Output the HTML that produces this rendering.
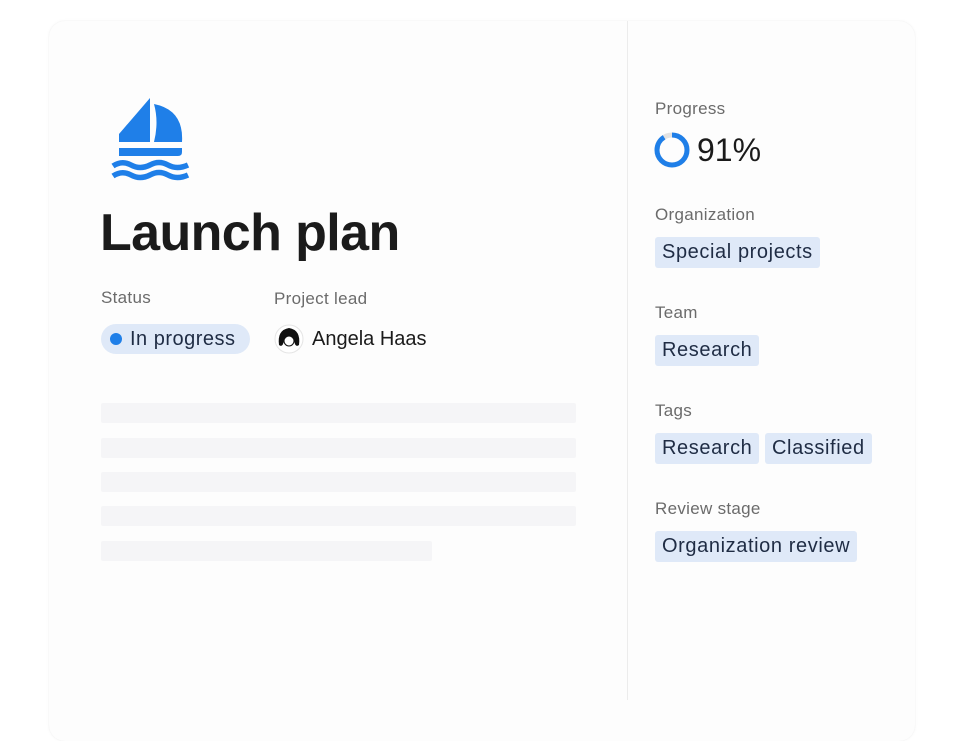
<!DOCTYPE html>
<html><head><style>
body{margin:0;width:964px;height:700px;background:#fff;font-family:"Liberation Sans",sans-serif;overflow:hidden;position:relative}
.card{position:absolute;left:49px;top:21px;width:866px;height:720px;background:#fdfdfd;border-radius:16px;box-shadow:0 0 3px rgba(0,0,0,0.05),0 0 1px rgba(0,0,0,0.06)}
.div{position:absolute;left:627px;top:21px;width:1px;height:679px;background:#ececec}
.t{position:absolute;white-space:nowrap}
.lbl{font-size:17px;color:#6b6b6b;letter-spacing:0.3px}
.chip{position:absolute;background:#dfe9f8;color:#1f2c44;font-size:20px;height:31px;line-height:31px;padding:0 7px;border-radius:3px;letter-spacing:0.6px}
.bar{position:absolute;left:101px;height:20px;background:#f5f5f7;border-radius:2px}
</style></head><body>
<div class="card"></div>
<div class="div"></div>
<svg style="position:absolute;left:0;top:0" width="964" height="700">
<g fill="#1f7fe8">
<path d="M150 98 L150 142 L119 142 L119 134 Z"/>
<path d="M154 104 Q184 110 182 142 L154 142 Q159 122 154 104 Z"/>
<path d="M119 148 H182 V152 Q182 156 178 156 H119 Z"/>
</g>
<g fill="none" stroke="#1f7fe8" stroke-width="5.5">
<path d="M113 166 Q122 160 131 165 Q140 170 150 165 Q159 160 168 165 Q177 170 188 165"/>
<path d="M113 176 Q122 170 131 175 Q140 180 150 175 Q159 170 168 175 Q177 180 188 175"/>
</g>
<circle cx="672" cy="150" r="15" fill="none" stroke="#e2e2e2" stroke-width="5"/>
<circle cx="672" cy="150" r="15" fill="none" stroke="#1f7fe8" stroke-width="5" stroke-dasharray="85.8 94.2" transform="rotate(-90 672 150)"/>
<circle cx="289" cy="339" r="14" fill="#fff" stroke="#e5e5e5"/>
<path d="M279 345 Q277 330 289 328 Q301 330 299 345 Q295 348 294 340 Q289 336 284 340 Q283 348 279 345Z" fill="#111"/>
<circle cx="289" cy="341" r="5" fill="#fff" stroke="#111" stroke-width="1"/>
</svg>
<div class="t" style="left:100px;top:203px;font-size:52px;font-weight:bold;color:#1b1b1b;letter-spacing:-0.6px">Launch plan</div>
<div class="t lbl" style="left:101px;top:288px">Status</div>
<div class="t lbl" style="left:274px;top:289px">Project lead</div>
<div class="t" style="left:101px;top:324px;height:30px;width:149px;background:#dfe9f8;border-radius:15px"></div>
<div class="t" style="left:110px;top:333px;width:12px;height:12px;border-radius:50%;background:#1f7fe8"></div>
<div class="t" style="left:130px;top:328px;font-size:20px;color:#1f2c44;letter-spacing:0.5px">In progress</div>
<div class="t" style="left:312px;top:328px;font-size:20px;color:#1b1b1b">Angela Haas</div>
<div class="bar" style="top:403px;width:475px"></div>
<div class="bar" style="top:438px;width:475px"></div>
<div class="bar" style="top:472px;width:475px"></div>
<div class="bar" style="top:506px;width:475px"></div>
<div class="bar" style="top:541px;width:331px"></div>
<div class="t lbl" style="left:655px;top:99px">Progress</div>
<div class="t" style="left:697px;top:132px;font-size:32px;color:#1b1b1b">91%</div>
<div class="t lbl" style="left:655px;top:205px">Organization</div>
<div class="chip" style="left:655px;top:237px">Special projects</div>
<div class="t lbl" style="left:655px;top:303px">Team</div>
<div class="chip" style="left:655px;top:335px">Research</div>
<div class="t lbl" style="left:655px;top:401px">Tags</div>
<div class="chip" style="left:655px;top:433px">Research</div>
<div class="chip" style="left:765px;top:433px">Classified</div>
<div class="t lbl" style="left:655px;top:499px">Review stage</div>
<div class="chip" style="left:655px;top:531px">Organization review</div>
</body></html>
